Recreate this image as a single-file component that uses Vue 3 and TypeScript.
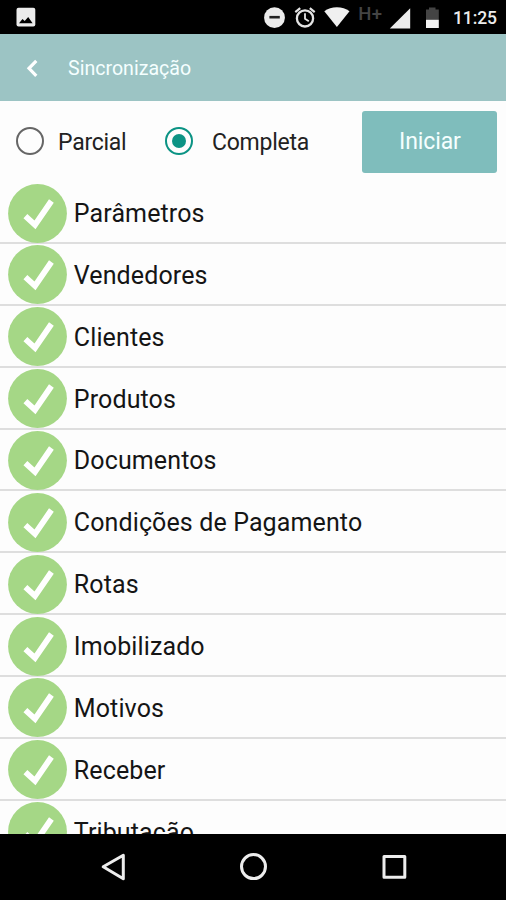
<script setup lang="ts">
import { ref } from 'vue'

type Mode = 'parcial' | 'completa'

const mode = ref<Mode>('completa')
const modes: { id: Mode; label: string }[] = [
  { id: 'parcial', label: 'Parcial' },
  { id: 'completa', label: 'Completa' },
]

const items: string[] = [
  'Parâmetros',
  'Vendedores',
  'Clientes',
  'Produtos',
  'Documentos',
  'Condições de Pagamento',
  'Rotas',
  'Imobilizado',
  'Motivos',
  'Receber',
  'Tributação',
]
</script>

<template>
  <div class="screen">
    <div class="status">
      <svg class="picture" width="20" height="20" viewBox="0 0 20 20">
        <rect x="0.5" y="0.7" width="18.8" height="18.8" rx="2" fill="#ececec" />
        <path d="M3 16.3 L6.5 12 L8.7 14 L12.2 10 L16.6 16.3 Z" fill="#000" />
      </svg>
      <svg class="indicators" width="180" height="34" viewBox="0 0 180 34">
        <circle cx="14.5" cy="17.7" r="10.4" fill="#ececec" />
        <rect x="9.4" y="15.9" width="10.4" height="2.6" fill="#222" />
        <g fill="none" stroke="#e4e4e4">
          <circle cx="45" cy="18.4" r="8.1" stroke-width="2.3" />
          <path d="M45 13.2 V18.7 L48.8 21.2" stroke-width="1.8" />
          <path d="M35.3 12.2 L40.2 8.2 M54.7 12.2 L49.8 8.2" stroke-width="2.2" />
        </g>
        <path d="M64.3 11.3 C71 5.8 82.8 5.8 89.5 11.3 L76.9 27 Z" fill="#f0f0f0" />
        <path d="M150.2 28.5 H129.8 L150.2 8.2 Z" fill="#ececec" />
        <path d="M166 20 V9.5 H169 V7.4 H175.5 V9.5 H178.8 V20 Z" fill="#444" />
        <rect x="166" y="19.8" width="12.8" height="8.2" fill="#f2f2f2" />
        <text x="98.3" y="19.5" class="network">H+</text>
      </svg>
      <span class="clock">11:25</span>
    </div>

    <header class="bar">
      <svg class="back" width="14" height="20" viewBox="0 0 14 20">
        <path d="M11.3 2.8 L4 10.3 L11.3 17.8" fill="none" stroke="#fff" stroke-width="3.2" />
      </svg>
      <h1 class="title">Sincronização</h1>
    </header>

    <main class="content">
      <div class="controls">
        <label
          v-for="option in modes"
          :key="option.id"
          class="option"
          :class="[option.id, { selected: mode === option.id }]"
          @click="mode = option.id"
        >
          <span class="radio"><span v-if="mode === option.id" class="dot" /></span>
          <span class="option-label">{{ option.label }}</span>
        </label>
        <button class="start" type="button"><span>Iniciar</span></button>
      </div>

      <ul class="list">
        <li v-for="item in items" :key="item" class="row">
          <svg class="check" width="59" height="59" viewBox="0 0 59 59">
            <circle cx="29.5" cy="29.5" r="29.4" fill="#a5d786" />
            <path d="M17.4 32.2 L27 40.8 L43.4 17" fill="none" stroke="#fff" stroke-width="5.8" />
          </svg>
          <span class="name">{{ item }}</span>
        </li>
      </ul>
    </main>

    <nav class="nav">
      <svg width="506" height="66" viewBox="0 0 506 66">
        <g fill="none" stroke="#ededed" stroke-width="3" stroke-linejoin="round">
          <path d="M103.2 32.8 L123.3 21.2 V44.8 Z" />
          <circle cx="253.5" cy="32.6" r="12" />
          <rect x="384" y="22.5" width="20.8" height="20.8" />
        </g>
      </svg>
    </nav>
  </div>
</template>

<style>
body {
  margin: 0;
}
</style>

<style scoped>
.screen {
  display: flex;
  flex-direction: column;
  width: 506px;
  height: 900px;
  overflow: hidden;
  background: #fdfdfd;
  font-family: Roboto, 'Liberation Sans', sans-serif;
}

.status {
  display: flex;
  flex: none;
  height: 34px;
  background: #000;
}

.picture {
  flex: none;
  margin: 7px 0 0 16px;
}

.indicators {
  flex: none;
  margin-left: 224px;
}

.network {
  font-size: 18.5px;
  font-weight: 500;
  letter-spacing: 0.3px;
  fill: #444;
}

.clock {
  margin-left: 13px;
  color: #ececec;
  font-size: 17.5px;
  font-weight: 500;
  letter-spacing: -0.1px;
  line-height: 36px;
}

.bar {
  display: flex;
  flex: none;
  align-items: center;
  height: 67px;
  background: #9cc4c4;
}

.back {
  flex: none;
  margin-left: 25px;
}

.title {
  margin: 3px 0 0 29px;
  color: #f5ffff;
  font-size: 19.6px;
  font-weight: 400;
  line-height: 28px;
}

.content {
  flex: 1;
  min-height: 0;
  overflow: hidden;
}

.controls {
  display: flex;
  align-items: flex-start;
  height: 81.1px;
}

.option {
  display: flex;
  align-items: center;
  height: 80px;
}

.parcial {
  width: 149px;
  padding-left: 16px;
}

.completa {
  width: 197.4px;
}

.radio {
  display: flex;
  flex: none;
  align-items: center;
  justify-content: center;
  box-sizing: border-box;
  width: 28px;
  height: 28px;
  border: 2.5px solid #666;
  border-radius: 50%;
}

.selected .radio {
  border-color: #0b9384;
}

.dot {
  width: 14px;
  height: 14px;
  border-radius: 50%;
  background: #0b9384;
}

.option-label {
  margin: 2px 0 0 14px;
  color: #222;
  font-size: 23px;
  letter-spacing: -0.25px;
}

.completa .option-label {
  margin-left: 19px;
}

.start {
  width: 135px;
  height: 62px;
  margin-top: 10px;
  padding: 0 0 2px;
  border: 0;
  border-radius: 3px;
  background: #7fbdbc;
  color: #f5ffff;
  font-family: inherit;
  font-size: 23px;
  letter-spacing: -0.1px;
}

.list {
  margin: 0;
  padding: 0;
  list-style: none;
}

.row {
  display: flex;
  align-items: center;
  box-sizing: border-box;
  height: 61.87px;
  padding: 2px 0 0 7.8px;
  border-bottom: 2px solid #dedede;
}

.check {
  flex: none;
}

.name {
  margin: 1px 0 0 7px;
  color: #151515;
  font-size: 25px;
  letter-spacing: 0.12px;
  white-space: nowrap;
}

.nav {
  flex: none;
  height: 66px;
  background: #000;
}

.nav svg {
  display: block;
}
</style>
